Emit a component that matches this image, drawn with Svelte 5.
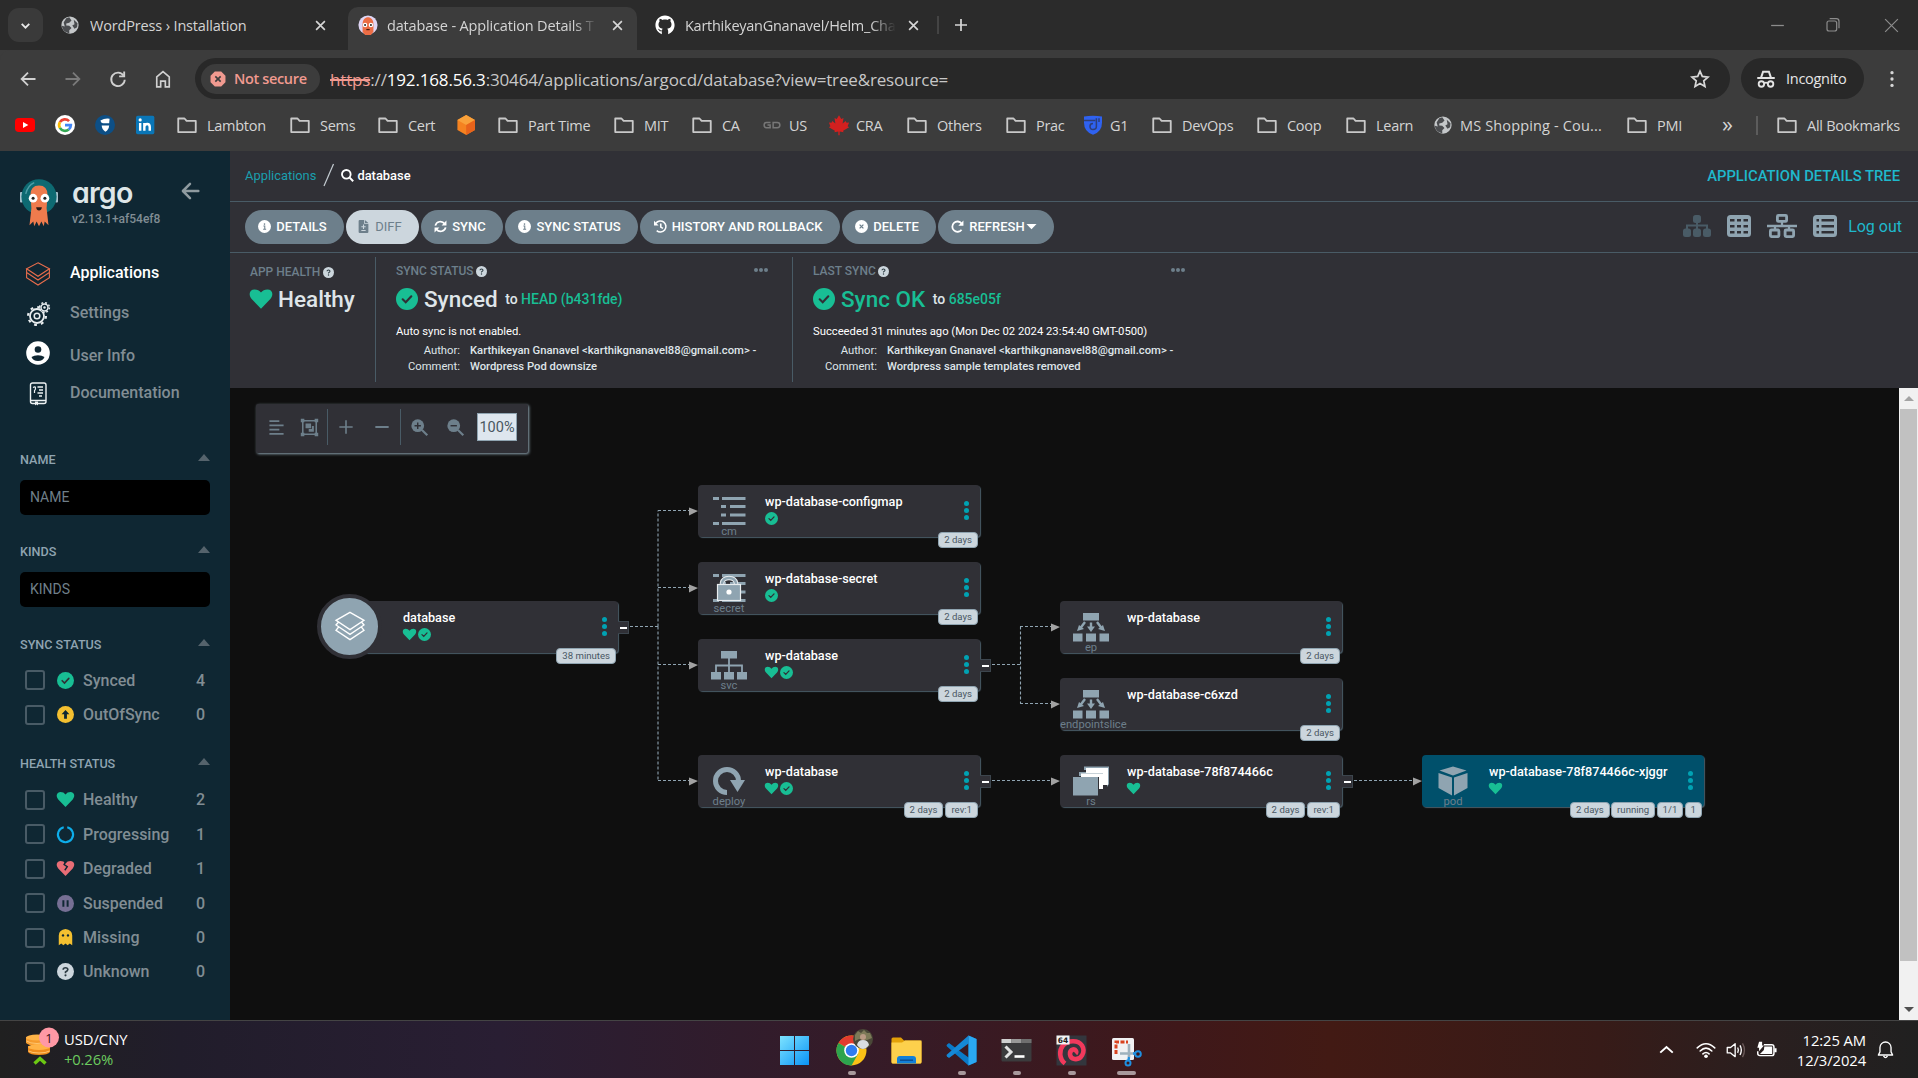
<script>
  const tabs = [
    { icon: 'globe', title: 'WordPress › Installation', active: false },
    { icon: 'argo', title: 'database - Application Details T', active: true },
    { icon: 'github', title: 'KarthikeyanGnanavel/Helm_Cha', active: false },
  ];

  const bookmarks = [
    { icon: 'youtube' }, { icon: 'google' }, { icon: 'shield' }, { icon: 'linkedin' },
    { icon: 'folder', label: 'Lambton' }, { icon: 'folder', label: 'Sems' }, { icon: 'folder', label: 'Cert' },
    { icon: 'cube' },
    { icon: 'folder', label: 'Part Time' }, { icon: 'folder', label: 'MIT' }, { icon: 'folder', label: 'CA' },
    { icon: 'gd', label: 'US' }, { icon: 'maple', label: 'CRA' },
    { icon: 'folder', label: 'Others' }, { icon: 'folder', label: 'Prac' },
    { icon: 'g1', label: 'G1' },
    { icon: 'folder', label: 'DevOps' }, { icon: 'folder', label: 'Coop' }, { icon: 'folder', label: 'Learn' },
    { icon: 'globe', label: 'MS Shopping - Cou...' },
    { icon: 'folder', label: 'PMI' },
  ];

  const nav = [
    { icon: 'layers', label: 'Applications', active: true },
    { icon: 'gears', label: 'Settings' },
    { icon: 'user', label: 'User Info' },
    { icon: 'docs', label: 'Documentation' },
  ];

  const syncFilters = [
    { icon: 'check', label: 'Synced', count: 4 },
    { icon: 'up', label: 'OutOfSync', count: 0 },
  ];
  const healthFilters = [
    { icon: 'heart', label: 'Healthy', count: 2 },
    { icon: 'progress', label: 'Progressing', count: 1 },
    { icon: 'broken', label: 'Degraded', count: 1 },
    { icon: 'pause', label: 'Suspended', count: 0 },
    { icon: 'ghost', label: 'Missing', count: 0 },
    { icon: 'question', label: 'Unknown', count: 0 },
  ];

  const actions = [
    { icon: 'info', label: 'DETAILS' },
    { icon: 'filediff', label: 'DIFF', disabled: true },
    { icon: 'sync', label: 'SYNC' },
    { icon: 'info', label: 'SYNC STATUS' },
    { icon: 'history', label: 'HISTORY AND ROLLBACK' },
    { icon: 'times', label: 'DELETE' },
    { icon: 'redo', label: 'REFRESH', caret: true },
  ];

  // Coordinates are relative to the tree canvas.
  const nodes = [
    { x: 106, y: 213, kind: 'app', name: 'database', health: true, sync: true, tags: ['38 minutes'], expand: true },
    { x: 468, y: 97, kind: 'cm', name: 'wp-database-configmap', sync: true, tags: ['2 days'] },
    { x: 468, y: 174, kind: 'secret', name: 'wp-database-secret', sync: true, tags: ['2 days'] },
    { x: 468, y: 251, kind: 'svc', name: 'wp-database', health: true, sync: true, tags: ['2 days'], expand: true },
    { x: 468, y: 367, kind: 'deploy', name: 'wp-database', health: true, sync: true, tags: ['2 days', 'rev:1'], expand: true },
    { x: 830, y: 213, kind: 'ep', name: 'wp-database', tags: ['2 days'] },
    { x: 830, y: 290, kind: 'endpointslice', name: 'wp-database-c6xzd', tags: ['2 days'] },
    { x: 830, y: 367, kind: 'rs', name: 'wp-database-78f874466c', health: true, tags: ['2 days', 'rev:1'], expand: true },
    { x: 1192, y: 367, kind: 'pod', name: 'wp-database-78f874466c-xjggr', health: true, tags: ['2 days', 'running', '1/1', '1'], selected: true },
  ];

  const edges = [
    'M400 238.5H428', 'M428 238.5V122.5', 'M428 238.5V392.5', 'M428 122.5H460', 'M428 199.5H460', 'M428 276.5H460', 'M428 392.5H460',
    'M762 276.5H790', 'M790.5 238.5V315.5', 'M790 238.5H822', 'M790 315.5H822',
    'M762 392.5H822', 'M1124 392.5H1184',
  ];
  const arrows = [[468, 124], [468, 201], [468, 278], [468, 394], [830, 240], [830, 317], [830, 394], [1192, 394]];

  const apps = [
    { icon: 'windows' }, { icon: 'chrome', dot: true }, { icon: 'explorer' }, { icon: 'vscode', dot: true },
    { icon: 'terminal', dot: true }, { icon: 'swirl', dot: true }, { icon: 'snip', dot: true, wide: true },
  ];
</script>

{#snippet icon(name, size)}
  <svg class="icon" width={size} height={size} viewBox="0 0 24 24" fill="none" stroke-linecap="butt">
    {#if name === 'globe'}
      <circle cx="12" cy="12" r="11.5" fill="#c4c7c9" />
      <path d="M11 1.500L14 6L11 9L7 10V12.500L11 13L14 16L11 19V23C5 22 1.500 18 1.200 13L5 14L3.500 8.500L7 3Z" fill="#4a4c4f" />
      <path d="M17 5L22 9.500L21.500 15L18 17L15 12.500L18 11Z" fill="#4a4c4f" />
    {:else if name === 'argo'}
      <circle cx="12" cy="12" r="11.500" fill="#dfd6f4" />
      <path d="M5.500 11C5.500 0 18.500 0 18.500 11V20L15.500 24H8.500L5.500 20Z" fill="#ec6d45" />
      <circle cx="8.500" cy="12" r="2.700" fill="#fff" /><circle cx="15.500" cy="12" r="2.700" fill="#fff" />
      <circle cx="8.500" cy="12" r="1.200" fill="#222" /><circle cx="15.500" cy="12" r="1.200" fill="#222" />
      <path d="M10 17.500H14" stroke="#4a1c10" stroke-width="1.500" />
    {:else if name === 'github'}
      <path d="M12 .5C5.400.5.500 5.600.500 12C.5 17 3.700 21.400 8.200 23V19.500C5.200 20 4.800 17.700 3.800 17C3 16.400 4.300 16.200 5.200 17.200C6 18.200 6.800 18.900 8.400 18.300C8.500 17.500 8.900 16.900 9.300 16.600C6.500 16.200 4.200 15 4.200 11.200C4.200 9.700 4.700 8.600 5.500 7.800C5.200 7 5.100 5.600 5.700 4.600C7 4.500 8.300 5.500 8.900 5.900C10.800 5.300 13.200 5.300 15.100 5.900C15.700 5.500 17 4.500 18.300 4.600C18.900 5.600 18.800 7 18.500 7.800C19.300 8.600 19.800 9.700 19.800 11.200C19.800 15 17.500 16.200 14.700 16.600C15.400 17.200 15.800 18.100 15.800 19.300V23C20.300 21.400 23.500 17 23.500 12C23.500 5.600 18.600.5 12 .5Z" fill="#fff" />
    {:else if name === 'close'}
      <path d="M5 5L19 19M19 5L5 19" stroke="#d6d6d6" stroke-width="2.600" />
    {:else if name === 'plus'}
      <path d="M12 3V21M3 12H21" stroke="#d6d6d6" stroke-width="2.600" />
    {:else if name === 'chevdown'}
      <path d="M5 9L12 16L19 9" stroke="#e8e8e8" stroke-width="3.400" />
    {:else if name === 'min'}
      <path d="M3 12H21" stroke="#8c8c8c" stroke-width="1.800" />
    {:else if name === 'restore'}
      <rect x="3" y="6" width="14.500" height="15" rx="3" stroke="#8c8c8c" stroke-width="1.800" />
      <path d="M7 2.500H17Q21 2.500 21 6.500V17" stroke="#8c8c8c" stroke-width="1.800" />
    {:else if name === 'winclose'}
      <path d="M3 3L21 21M21 3L3 21" stroke="#8c8c8c" stroke-width="1.700" />
    {:else if name === 'back'}
      <path d="M22 12H4M12 3.500L3.500 12L12 20.500" stroke="#d0d0d0" stroke-width="2.400" />
    {:else if name === 'forward'}
      <path d="M2 12H20M12 3.500L20.500 12L12 20.500" stroke="#7a7a7a" stroke-width="2.400" />
    {:else if name === 'reload'}
      <path d="M19.500 7.500A9 9 0 1 0 21 13" stroke="#d0d0d0" stroke-width="2.500" /><path d="M21.500 2V9.800H13.500V7.300H19V2Z" fill="#d0d0d0" />
    {:else if name === 'home'}
      <path d="M4.500 9.500L12 3L19.500 9.500V21.500H14.800V14.500H9.200V21.500H4.500Z" stroke="#d0d0d0" stroke-width="2" />
    {:else if name === 'star'}
      <path d="M12 3.500L14.500 9.200L20.700 9.900L16.100 14L17.400 20.100L12 16.900L6.600 20.100L7.900 14L3.300 9.900L9.500 9.200Z" stroke="#d8d8d8" stroke-width="1.900" />
    {:else if name === 'incognito'}
      <path d="M1.500 10.800H22.500M6.200 10L8.500 3.200H15.500L17.800 10" stroke="#e4e4e4" stroke-width="2.400" />
      <circle cx="6.500" cy="18" r="3.300" stroke="#e4e4e4" stroke-width="2.200" /><circle cx="17.500" cy="18" r="3.300" stroke="#e4e4e4" stroke-width="2.200" />
      <path d="M9.500 17Q12 15.500 14.500 17" stroke="#e4e4e4" stroke-width="2" />
    {:else if name === 'dots'}
      <circle cx="12" cy="3.500" r="2.200" fill="#d6d6d6" /><circle cx="12" cy="12" r="2.200" fill="#d6d6d6" /><circle cx="12" cy="20.500" r="2.200" fill="#d6d6d6" />
    {:else if name === 'warn'}
      <path d="M7.200 .8H16.800L23.200 7.200V16.800L16.800 23.200H7.200L.8 16.800V7.200Z" fill="#f19a90" /><path d="M8 8L16 16M16 8L8 16" stroke="#3c3c3c" stroke-width="2.400" />
    {:else if name === 'folder'}
      <path d="M1.500 4.200H9L11.500 7H22.500V20.500H1.500Z" stroke="#c9c9c9" stroke-width="2.200" stroke-linejoin="round" />
    {:else if name === 'youtube'}
      <rect x="0" y="3.500" width="24" height="17" rx="4.500" fill="#f00" /><path d="M9.600 8.300L16 12L9.600 15.700Z" fill="#fff" />
    {:else if name === 'google'}
      <circle cx="12" cy="12" r="12" fill="#fff" />
      <path d="M16.900 7.300A7 7 0 0 0 5.900 8.500" stroke="#ea4335" stroke-width="3.200" />
      <path d="M5.900 8.500A7 7 0 0 0 5.900 15.500" stroke="#fbbc05" stroke-width="3.200" />
      <path d="M5.900 15.500A7 7 0 0 0 16.500 17.400" stroke="#34a853" stroke-width="3.200" />
      <path d="M12 12.200H19A7 7 0 0 1 16.500 17.400" stroke="#4285f4" stroke-width="3.200" />
    {:else if name === 'shield'}
      <circle cx="12" cy="12" r="12" fill="#0d4f86" />
      <path d="M6.500 6.500Q12 3.500 17.500 4.500L17 10H9.500Q7 9.500 6.500 6.500Z" fill="#fff" /><path d="M8 12.500H17Q16.500 18 12.500 20Q8.500 17.500 8 12.500Z" fill="#fff" />
    {:else if name === 'linkedin'}
      <rect x="0" y="1" width="22" height="22" rx="2" fill="#0a76b7" />
      <path d="M5 9.500V19M10 19V9.500M10 14Q10.500 10.800 13.500 10.800Q16.500 10.800 16.500 14.500V19" stroke="#fff" stroke-width="2.900" /><circle cx="5" cy="5.900" r="1.900" fill="#fff" />
    {:else if name === 'cube'}
      <path d="M11 0L21.500 6V18L11 24L.5 18V6Z" fill="#f58220" /><path d="M11 0L21.500 6L11 12L.5 6Z" fill="#f9a13a" /><path d="M11 12L21.500 6V18L11 24Z" fill="#e8631b" />
    {:else if name === 'gd'}
      <path d="M10 8.500H4.500Q1.500 8.500 1.500 12T4.500 15.500H9.500V12H6M13.500 8.500H19Q22.500 8.500 22.500 12T19 15.500H13.500Z" stroke="#777" stroke-width="2" />
    {:else if name === 'maple'}
      <path d="M12-1L15 4L18 2.500L16.800 10L21 6.500L22 9L25.500 8.500L23.500 13.500L25.500 15L17.500 19.500L18 21.500L12.900 20.500V25.500H11.100V20.500L6 21.500L6.500 19.500L-1.500 15L.5 13.500L-1.500 8.500L2 9L3 6.500L7.200 10L6 2.500L9 4Z" fill="#d2201f" />
    {:else if name === 'g1'}
      <path d="M0 .5Q12-1 24 .5V9Q24 21 12 25Q0 21 0 9Z" fill="#2f62f0" /><path d="M0 6H15M16.500 3V14Q16.500 18 12 18Q8 18 8 13.500Q8 10 12 10M20 3V8" stroke="#2d3e78" stroke-width="2" />
    {:else if name === 'layers'}
      <g stroke="#e96d4c" stroke-width="1.100"><path d="M12 .8L23.400 6.800L12 14.300L.6 6.800Z" /><path d="M.6 6.800V10.500L12 18L23.400 10.500V6.800M.6 10.500V15.600L12 23L23.400 15.600V10.500" /></g>
    {:else if name === 'gears'}
      <circle cx="11" cy="14" r="7" stroke="#e8edef" stroke-width="1.800" /><circle cx="11" cy="14" r="8.900" stroke="#e8edef" stroke-width="2.200" stroke-dasharray="2.800 4.190" />
      <circle cx="11" cy="14" r="2.800" stroke="#e8edef" stroke-width="1.500" />
      <circle cx="18.500" cy="5.500" r="4.600" fill="#0f2733" /><circle cx="18.500" cy="5.500" r="3.500" stroke="#e8edef" stroke-width="1.500" /><circle cx="18.500" cy="5.500" r="4.900" stroke="#e8edef" stroke-width="1.500" stroke-dasharray="1.900 1.950" /><circle cx="18.500" cy="5.500" r="1.200" fill="#e8edef" />
    {:else if name === 'user'}
      <circle cx="12" cy="12" r="11.800" fill="#fff" /><circle cx="12" cy="8.500" r="3.300" fill="#0f2733" /><path d="M5.500 16Q8 14.300 12 14.300T18.500 16Q17 20 12 20T5.500 16Z" fill="#0f2733" />
    {:else if name === 'docs'}
      <rect x="4.500" y="1" width="15.500" height="20.500" rx="2" stroke="#eef2f4" stroke-width="1.400" /><path d="M5 18.500H20M11.500 5H17M13 8H17M11.500 11H17M13 14H16" stroke="#eef2f4" stroke-width="1.300" /><path d="M7 5.500Q9.500 4 9.500 6T8.500 8.500V11" stroke="#eef2f4" stroke-width="1.200" /><path d="M9 19.500H12V23.500L10.500 22.300L9 23.500Z" fill="#eef2f4" />
    {:else if name === 'sideback'}
      <path d="M22 12H5M12 3.500L3.500 12L12 20.500" stroke="#8f9ba0" stroke-width="3" stroke-linecap="round" stroke-linejoin="round" />
    {:else if name === 'check'}
      <circle cx="12" cy="12" r="12" fill="#18be94" /><path d="M7.300 12.300L10.600 15.500L16.700 9" stroke="#303036" stroke-width="2.300" stroke-linecap="round" />
    {:else if name === 'up'}
      <circle cx="12" cy="12" r="12" fill="#f4c030" /><path d="M12 5.500L17.500 11.500H14V18H10V11.500H6.500Z" fill="#0f2733" />
    {:else if name === 'heart'}
      <path d="M12 22.500L1.800 12C-2.300 7-.2 1.500 5 1.500Q9.500 1.500 12 5Q14.500 1.500 19 1.500C24.200 1.500 26.300 7 22.200 12Z" fill="#18be94" />
    {:else if name === 'progress'}
      <path d="M9.500 1.700A10.700 10.700 0 1 0 14.500 1.700" stroke="#0dadea" stroke-width="2.900" />
    {:else if name === 'broken'}
      <path d="M12 22.500L1.800 12C-2.300 7-.2 1.500 5 1.500Q9.500 1.500 12 5Q14.500 1.500 19 1.500C24.200 1.500 26.300 7 22.200 12Z" fill="#e96d76" /><path d="M13 1L10 6.500L14.500 9.500L11 14.500" stroke="#0f2733" stroke-width="2" />
    {:else if name === 'pause'}
      <circle cx="12" cy="12" r="12" fill="#766f94" /><path d="M9 7.500V16.500M15 7.500V16.500" stroke="#0f2733" stroke-width="2.800" />
    {:else if name === 'ghost'}
      <path d="M2.500 23V9Q3 1 12 0Q21 1 21.500 9V23L18 20.500L15 23L12 20.500L9 23L6 20.500Z" fill="#f4c030" /><circle cx="8.500" cy="9" r="1.700" fill="#0f2733" /><circle cx="15.500" cy="9" r="1.700" fill="#0f2733" />
    {:else if name === 'question'}
      <circle cx="12" cy="12" r="12" fill="#ccd6dd" /><path d="M8.700 9.500Q8.800 6.700 12 6.700T15.300 9.300Q15.300 11 12 12.800V14.300" stroke="#2b3a42" stroke-width="2.300" /><circle cx="12" cy="17.400" r="1.500" fill="#2b3a42" />
    {:else if name === 'info'}
      <circle cx="12" cy="12" r="12" fill="#fff" /><path d="M10 11H12.500V17M9.500 17H15" stroke="#6d7f8b" stroke-width="1.900" /><circle cx="12" cy="7.500" r="1.500" fill="#6d7f8b" />
    {:else if name === 'times'}
      <circle cx="12" cy="12" r="12" fill="#fff" /><path d="M8.500 8.500L15.500 15.500M15.500 8.500L8.500 15.500" stroke="#6d7f8b" stroke-width="2.300" />
    {:else if name === 'filediff'}
      <path d="M3 2Q3 0 5 0H13V7H21V22Q21 24 19 24H5Q3 24 3 22ZM14.500 0L21 5.500H14.500Z" fill="#6d7f8b" /><path d="M8 12.500H16M12 8.500V16.500M8 19.500H16" stroke="#ccd6dd" stroke-width="2" />
    {:else if name === 'sync'}
      <path d="M2.500 10.500A9.500 9.500 0 0 1 19.500 7M21.500 13.500A9.500 9.500 0 0 1 4.500 17" stroke="#fff" stroke-width="3.200" /><path d="M23 1V10H14ZM1 23V14H10Z" fill="#fff" />
    {:else if name === 'history'}
      <path d="M3.500 6A10.200 10.200 0 1 1 5 19.500M12.500 6.500V13L16.500 15.500" stroke="#fff" stroke-width="2.900" /><path d="M0 1.500V10H8.500Z" fill="#fff" />
    {:else if name === 'redo'}
      <path d="M19.500 6.500A9.500 9.500 0 1 0 19.500 18" stroke="#fff" stroke-width="3.300" /><path d="M23 1V10.500H13.500Z" fill="#fff" />
    {:else if name === 'search'}
      <circle cx="9.800" cy="9.800" r="8" stroke="#fff" stroke-width="3.400" /><path d="M15.500 15.500L22.500 22.500" stroke="#fff" stroke-width="3.800" />
    {:else if name === 'caret'}
      <path d="M1 6.500H23L12 18Z" fill="#fff" />
    {:else if name === 'align'}
      <path d="M2 3H16M2 9H22M2 15H16M2 21H22" stroke="#6d7f8b" stroke-width="2.500" />
    {:else if name === 'fit'}
      <path d="M3.500 3.500H20.500V20.500H3.500Z" stroke="#6d7f8b" stroke-width="2" /><path d="M1 1H5.500V5.500H1ZM18.500 1H23V5.500H18.500ZM1 18.500H5.500V23H1ZM18.500 18.500H23V23H18.500ZM7 7H14V13H7ZM11 14H15V10H17.500V17.500H11Z" fill="#6d7f8b" />
    {:else if name === 'tplus'}
      <path d="M12 2V22M2 12H22" stroke="#6d7f8b" stroke-width="2.400" />
    {:else if name === 'tminus'}
      <path d="M2 12H22" stroke="#6d7f8b" stroke-width="3" />
    {:else if name === 'zoomin' || name === 'zoomout'}
      <circle cx="9.500" cy="9.500" r="9" fill="#6d7f8b" /><path d="M15.500 15.500L23 23" stroke="#6d7f8b" stroke-width="3" /><path d={name === 'zoomin' ? 'M9.500 5V14M5 9.500H14' : 'M5 9.500H14'} stroke="#303036" stroke-width="2" />
    {:else if name === 'wifi'}
      <path d="M1.500 9.500Q12-.5 22.500 9.500M5 13.200Q12 6.500 19 13.200M8.300 16.700Q12 13.200 15.700 16.700" stroke="#fff" stroke-width="1.900" stroke-linecap="round" /><circle cx="12" cy="19.500" r="2.200" fill="#fff" />
    {:else if name === 'sound'}
      <path d="M1.500 9V15.500H5.500L11 20V4.500L5.500 9Z" stroke="#fff" stroke-width="1.600" stroke-linejoin="round" /><path d="M14 9Q15.800 12 14 15.500M16.800 6.500Q20 12 16.800 18" stroke="#fff" stroke-width="1.600" /><path d="M19.800 4Q24.500 12 19.800 20.500" stroke="#6b5a59" stroke-width="1.600" />
    {:else if name === 'battery'}
      <path d="M9 6.500H18Q20.500 6.500 20.500 9V16.500Q20.500 19 18 19H4.500Q2 19 2 16.500V14" stroke="#fff" stroke-width="1.700" /><path d="M9.500 8.500H18.500V17H4.500L9 12.500Z" fill="#fff" /><path d="M21 10.500H23.500V15H21ZM3.500 3H7V7.500H9L3.500 14V10H1.500Z" fill="#fff" />
    {:else if name === 'bell'}
      <path d="M3 19H21L19 15V9.500A7 7 0 0 0 5 9.500V15Z" stroke="#fff" stroke-width="1.700" stroke-linejoin="round" /><path d="M9.500 20Q12 24.500 14.500 20" stroke="#fff" stroke-width="1.700" />
    {:else if name === 'chevup'}
      <path d="M2 17L12 8L22 17" stroke="#fff" stroke-width="3.200" />
    {/if}
  </svg>
{/snippet}

{#snippet kindIcon(kind)}
  <svg class="icon" width="36" height="30" viewBox="0 0 36 30" fill="#8fa4b1">
    {#if kind === 'cm' || kind === 'secret'}
      <path d="M2 1H8V4H2ZM11 1H34.500V4H11ZM10 9H15V12H10ZM19 9H34.500V12H19ZM10 17.500H15V20.500H10ZM19 17.500H34.500V20.500H19ZM2 26H8V29H2ZM11 26H34.500V29H11Z" />
      {#if kind === 'secret'}
        <path d="M11 13V10Q12 5 18 5T25 10V13" fill="none" stroke="#e8edf0" stroke-width="4.500" /><path d="M11 13V10Q12 5 18 5T25 10V13" fill="none" stroke="#8fa4b1" stroke-width="2.500" />
        <rect x="6.500" y="11.500" width="23" height="16" stroke="#e8edf0" stroke-width="1.200" /><circle cx="18" cy="19" r="2.600" fill="#fff" />
      {/if}
    {:else if kind === 'svc'}
      <path d="M10 1H26V8.500H10ZM0 22H10V29.500H0ZM13 22H23V29.500H13ZM26 22H36V29.500H26Z" /><path d="M18 8V22M5 22V15.500H31V22" fill="none" stroke="#8fa4b1" stroke-width="1.800" />
    {:else if kind === 'ep' || kind === 'endpointslice'}
      <path d="M10 1H26V8.500H10ZM0 21.500H9.500V29.500H0ZM13 21.500H23V29.500H13ZM26.500 21.500H36V29.500H26.500ZM4 19L6 13L11 17ZM14 14.500H22L18 20ZM32 19L30 13L25 17Z" /><path d="M12 10L7.500 16M18 10.500V15M24 10L28.500 16" fill="none" stroke="#8fa4b1" stroke-width="2.400" />
    {:else if kind === 'deploy'}
      <path d="M16 26.500A11.500 11.500 0 1 1 27.500 15" fill="none" stroke="#8fa4b1" stroke-width="5" /><path d="M19 14H34L26.500 26Z" />
    {:else if kind === 'rs'}
      <path d="M11 .5H36V18L34 21V4H11ZM6 6H30V23H26V10H6Z" fill="#8fa4b1" /><path d="M13 2H35V19H30V7H13ZM8 7.500H30V23H26V11H8Z" fill="#fff" /><rect x="0" y="11" width="25" height="18.500" />
    {:else if kind === 'pod'}
      <path d="M18 .5L31.500 4.500L18 9.500L4.500 4.500ZM3.500 7L17 11.500V29.500L3.500 22ZM32.500 7L19 11.500V29.500L32.500 22Z" />
    {/if}
  </svg>
{/snippet}

{#snippet appIcon(name)}
  <svg class="icon" width="31" height="31" viewBox="0 0 31 31">
    {#if name === 'windows'}
      <linearGradient id="win" x1="0" y1="0" x2="1" y2="1"><stop offset="0" stop-color="#7de3ff" /><stop offset="1" stop-color="#0a93f5" /></linearGradient>
      <path d="M1 1H15V15H1ZM16 1H30V15H16ZM1 16H15V30H1ZM16 16H30V30H16Z" fill="url(#win)" />
    {:else if name === 'chrome'}
      <circle cx="15.500" cy="15.500" r="15" fill="#fbc116" /><path d="M15.500 15.500L2.500 8A15 15 0 0 1 28.500 8Z" fill="#e33b2e" /><path d="M15.500 15.500L2.500 8A15 15 0 0 0 15.500 30.500L22 19Z" fill="#2da44e" /><circle cx="15.500" cy="15.500" r="7.300" fill="#fff" /><circle cx="15.500" cy="15.500" r="5.700" fill="#2f7cf0" />
    {:else if name === 'explorer'}
      <path d="M.5 4Q.5 2.500 2 2.500H10L13 5.500H29Q30.500 5.500 30.500 7V27Q30.500 28.500 29 28.500H2Q.5 28.500 .5 27Z" fill="#e3a008" /><path d="M.5 7.500H11L14 5.500H30.500V27Q30.500 28.500 29 28.500H2Q.5 28.500 .5 27Z" fill="#fdd04c" /><path d="M6 28.500V24Q6 21 9 21H22Q25 21 25 24V28.500Z" fill="#1280d8" /><path d="M9 25.200H22" stroke="#0b4f94" stroke-width="1.500" />
    {:else if name === 'vscode'}
      <path d="M22.500 .5L30.500 4V27L22.500 30.500L1 11.500Q0 10.500 1 9.500L3 8L22.500 22.500Z" fill="#0a7ac8" /><path d="M22.500 8.500L3 23L1 21.500Q0 20.500 1 19.500L22.500 .5Z" fill="#1588d6" /><path d="M22.500 .5L30.500 4V27L22.500 30.500Z" fill="#2aa8f2" />
    {:else if name === 'terminal'}
      <rect x=".5" y="4" width="30" height="22.500" rx="1" fill="#3b3b3d" /><path d="M.5 4H10.500V8H.5Z" fill="#d0d0d0" /><path d="M10.500 4H20.500V8H10.500Z" fill="#989898" /><path d="M20.500 4H30.500V8H20.500Z" fill="#6f6f6f" /><path d="M4.500 11.500L10 17L4.500 22.500" fill="none" stroke="#e2e2e2" stroke-width="3" /><path d="M13.500 21.500H23.500" stroke="#fff" stroke-width="2.600" />
    {:else if name === 'swirl'}
      <rect x=".5" y=".5" width="30" height="30" fill="#33363d" /><path d="M9 28.500C3 24 3 15 7 10.500C12 5 22 4.500 26 10.500C30 17 25 25 18.500 24C13 23 12.500 16 17 14.500C20 14 21 17 19.500 18.500" fill="none" stroke="#f2395c" stroke-width="4.600" /><rect x=".5" y=".5" width="13" height="9" fill="#f3f3f3" /><text class="bits" x="1.800" y="8">64</text>
    {:else if name === 'snip'}
      <rect x="1" y="3" width="22" height="22" rx="1.500" fill="#f1f1f3" /><path d="M5 19V7H17" fill="none" stroke="#d9421f" stroke-width="3" stroke-dasharray="4 1.500" /><path d="M18 9V22M9 18.500H25" stroke="#9fb1bd" stroke-width="2.600" /><circle cx="27" cy="19" r="2.800" fill="none" stroke="#1f8fe0" stroke-width="2" /><circle cx="17" cy="28" r="2.500" fill="none" stroke="#1f8fe0" stroke-width="2" /><path d="M18 22L17.500 25.500M22 18.500H24.500" stroke="#1f8fe0" stroke-width="2.400" />
    {/if}
  </svg>
{/snippet}

{#snippet filterList(title, items, group)}
  <section class="filter {group}">
    <h3>{title}<i class="up"></i></h3>
    {#each items as f}
      <label class="option"><span class="box"></span><span class="opt-icon">{@render icon(f.icon, 17)}</span><span class="opt-label">{f.label}</span><b>{f.count}</b></label>
    {/each}
  </section>
{/snippet}

<div class="desktop">
  <header class="browser">
    <div class="tabstrip">
      <div class="tabsearch">{@render icon('chevdown', 13)}</div>
      <div class="tabs">
        {#each tabs as tab}
          <div class="tab" class:active={tab.active}>
            {@render icon(tab.icon, tab.icon === 'globe' ? 18 : 20)}
            <span class="title">{tab.title}</span>
            {@render icon('close', 15)}
          </div>
        {/each}
      </div>
      <i class="tabsep"></i>
      <span class="newtab">{@render icon('plus', 16)}</span>
      <div class="winctl"><span>{@render icon('min', 17)}</span><span>{@render icon('restore', 16)}</span><span>{@render icon('winclose', 17)}</span></div>
    </div>
    <div class="toolbar">
      <div class="navs">
        <span>{@render icon('back', 18)}</span><span>{@render icon('forward', 18)}</span><span>{@render icon('reload', 18)}</span><span>{@render icon('home', 20)}</span>
      </div>
      <div class="omnibox">
        <span class="chip">{@render icon('warn', 16)}Not secure</span>
        <span class="url"><s>https</s>://<b>192.168.56.3</b>:30464/applications/argocd/database?view=tree&amp;resource=</span>
        {@render icon('star', 22)}
      </div>
      <div class="incognito">{@render icon('incognito', 20)}<span>Incognito</span></div>
      <span class="menu">{@render icon('dots', 18)}</span>
    </div>
    <div class="bookmarks">
      {#each bookmarks as b}
        <span class="bm" class:folder={b.icon === 'folder'} class:site={b.icon === 'globe'}>{@render icon(b.icon, b.icon === 'folder' || !b.label ? 20 : 18)}{#if b.label}<span>{b.label}</span>{/if}</span>
      {/each}
      <span class="more">»</span>
      <i class="bmsep"></i>
      <span class="bm folder">{@render icon('folder', 20)}<span>All Bookmarks</span></span>
    </div>
  </header>

  <div class="page">
    <aside class="sidebar">
      <div class="brand">
        <svg class="icon" width="38" height="51" viewBox="0 0 40 52">
          <rect x="0" y="15" width="3" height="11" rx="1" fill="#a9c2cd" /><rect x="37" y="15" width="3" height="11" rx="1" fill="#a9c2cd" />
          <circle cx="20" cy="20" r="18.500" fill="#0e6a72" /><path d="M6 17Q8 8 15 5" fill="none" stroke="#4f9fa8" stroke-width="1.500" />
          <path d="M11 18Q11 8 20 8T29 18L28 32L30 50L26 46L25 51L22.500 46L20 51L17.500 46L15 51L14 46L10 50L12 32Z" fill="#ef7b4d" />
          <circle cx="13.800" cy="21.500" r="4.600" fill="#fff" /><circle cx="26.200" cy="21.500" r="4.600" fill="#fff" /><circle cx="13.800" cy="21.500" r="1.600" fill="#222" /><circle cx="26.200" cy="21.500" r="1.600" fill="#222" />
          <path d="M17 31H23Q22.500 34.500 20 34.500T17 31Z" fill="#2b1a16" />
        </svg>
        <div class="wordmark"><strong>argo</strong><small>v2.13.1+af54ef8</small></div>
        <span class="collapse">{@render icon('sideback', 20)}</span>
      </div>
      <nav>
        {#each nav as item}
          <a class:active={item.active} class={item.icon}><span class="ni">{@render icon(item.icon, 24)}</span>{item.label}</a>
        {/each}
      </nav>
      <section class="filter text"><h3>NAME<i class="up"></i></h3><div class="input">NAME</div></section>
      <section class="filter text"><h3>KINDS<i class="up"></i></h3><div class="input">KINDS</div></section>
      {@render filterList('SYNC STATUS', syncFilters, 'syncs')}
      {@render filterList('HEALTH STATUS', healthFilters, 'healths')}
    </aside>

    <main>
      <div class="crumbs">
        <span class="link">Applications</span>
        <svg class="slash" width="12" height="24" viewBox="0 0 12 24"><path d="M1 23L10.500 1" stroke="#c4ccd2" stroke-width="1.200" /></svg>
        {@render icon('search', 13)}<b>database</b>
        <span class="pagetitle">APPLICATION DETAILS TREE</span>
      </div>
      <div class="actions">
        <div class="buttons">
          {#each actions as a}
            <span class="btn" class:disabled={a.disabled}>{@render icon(a.icon, 13)}<span>{a.label}</span>{#if a.caret}<span class="drop">{@render icon('caret', 11)}</span>{/if}</span>
          {/each}
        </div>
        <div class="views">
          <svg class="icon" width="28" height="24" viewBox="0 0 28 24" fill="#495b66"><rect x="10" y="1" width="8" height="8" rx="2.500" /><rect x="0" y="14.500" width="8" height="8.500" rx="2.500" /><rect x="10" y="14.500" width="8" height="8.500" rx="2.500" /><rect x="20" y="14.500" width="8" height="8.500" rx="2.500" /><path d="M14 8V15M4 15V11.500H24V15" fill="none" stroke="#495b66" stroke-width="2" /></svg>
          <svg class="icon" width="24" height="24" viewBox="0 0 24 24"><rect x="0" y="1" width="24" height="22" rx="3.500" fill="#8fa4b1" /><path d="M3 5H7.500V7.500H3ZM10 5H14V7.500H10ZM16.500 5H21V7.500H16.500ZM3 11H7.500V13.500H3ZM10 11H14V13.500H10ZM16.500 11H21V13.500H16.500ZM3 17H7.500V19.500H3ZM10 17H14V19.500H10ZM16.500 17H21V19.500H16.500Z" fill="#303036" /></svg>
          <svg class="icon" width="30" height="24" viewBox="0 0 30 24" fill="none" stroke="#8fa4b1" stroke-width="2.800"><rect x="10.400" y="1.400" width="9.200" height="6" rx="1" /><path d="M15 8V12M0 12H30M8 12V16M22 12V16" stroke-width="2.300" /><rect x="3.400" y="16" width="8.500" height="6.600" rx="1" /><rect x="18.100" y="16" width="8.500" height="6.600" rx="1" /></svg>
          <svg class="icon" width="24" height="24" viewBox="0 0 24 24"><rect x="0" y="1" width="24" height="22" rx="3.500" fill="#8fa4b1" /><path d="M3.500 5H6V7.500H3.500ZM8.500 5H21V7.500H8.500ZM3.500 11H6V13.500H3.500ZM8.500 11H21V13.500H8.500ZM3.500 17H6V19.500H3.500ZM8.500 17H21V19.500H8.500Z" fill="#303036" /></svg>
          <span class="logout">Log out</span>
        </div>
      </div>
      <div class="status">
        <div class="cell health">
          <h4>APP HEALTH{@render icon('question', 11)}</h4>
          <div class="big">{@render icon('heart', 22)}<strong>Healthy</strong></div>
        </div>
        <div class="cell sync">
          <h4>SYNC STATUS{@render icon('question', 11)}<span class="ell"><i></i><i></i><i></i></span></h4>
          <div class="big">{@render icon('check', 22)}<strong>Synced</strong><span>to <em>HEAD (b431fde)</em></span></div>
          <p>Auto sync is not enabled.</p>
          <dl><dt>Author:</dt><dd>Karthikeyan Gnanavel &lt;karthikgnanavel88@gmail.com&gt; -</dd><dt>Comment:</dt><dd>Wordpress Pod downsize</dd></dl>
        </div>
        <div class="cell last">
          <h4>LAST SYNC{@render icon('question', 11)}<span class="ell"><i></i><i></i><i></i></span></h4>
          <div class="big">{@render icon('check', 22)}<strong class="green">Sync OK</strong><span>to <em>685e05f</em></span></div>
          <p>Succeeded 31 minutes ago (Mon Dec 02 2024 23:54:40 GMT-0500)</p>
          <dl><dt>Author:</dt><dd>Karthikeyan Gnanavel &lt;karthikgnanavel88@gmail.com&gt; -</dd><dt>Comment:</dt><dd>Wordpress sample templates removed</dd></dl>
        </div>
      </div>

      <div class="treewrap">
        <div class="tree">
          <div class="graphbar">
            <span class="g1">{@render icon('align', 17)}</span><span class="g2">{@render icon('fit', 19)}</span><i></i>
            <span class="g3">{@render icon('tplus', 16)}</span><span class="g3">{@render icon('tminus', 16)}</span><i></i>
            <span class="g3">{@render icon('zoomin', 17)}</span><span class="g3">{@render icon('zoomout', 17)}</span>
            <span class="pct">100%</span>
          </div>
          <svg class="edges" width="1669" height="632">
            {#each edges as d}<path {d} fill="none" stroke="#8fa4b1" stroke-width="1.100" stroke-dasharray="3 2" />{/each}
            {#each arrows as [x, y]}<path d="M{x - 9} {y - 4.5}L{x} {y - 1}L{x - 9} {y + 3.5}Z" fill="#a2a2a2" />{/each}
          </svg>
          {#each nodes as n}
            <div class="node" class:app={n.kind === 'app'} class:selected={n.selected} style="left:{n.x}px;top:{n.y}px">
              {#if n.kind === 'app'}
                <div class="appcircle"><svg class="icon" width="32" height="32" viewBox="0 0 24 24" fill="none" stroke="#fff" stroke-width="1"><path d="M12 1L22.500 7L12 14L1.500 7Z" /><path d="M3.500 8.300L1.500 10.500L12 17.500L22.500 10.500L20.500 8.300M3.500 12L1.500 14.500L12 21.500L22.500 14.500L20.500 12" /></svg></div>
              {:else}
                <div class="kind">{@render kindIcon(n.kind)}<span>{n.kind}</span></div>
              {/if}
              <div class="info">
                <span>{n.name}</span>
                <div class="marks">{#if n.health}{@render icon('heart', 13)}{/if}{#if n.sync}{@render icon('check', 13)}{/if}</div>
              </div>
              <div class="kebab"><i></i><i></i><i></i></div>
              {#if n.expand}<div class="expand"></div>{/if}
              <div class="tags">{#each n.tags as t}<span>{t}</span>{/each}</div>
            </div>
          {/each}
        </div>
        <div class="scroll"><i class="sup"></i><div class="thumb"></div><i class="sdown"></i></div>
      </div>
    </main>
  </div>

  <footer class="taskbar">
    <div class="widget">
      <svg class="icon" width="36" height="42" viewBox="0 0 36 42">
        <path d="M3 19V25Q5 28 14 28T25 25V19Z" fill="#f08c1c" /><path d="M1 10V16Q3 18.500 12 18.500T23 16V10Z" fill="#f59b2d" />
        <ellipse cx="12" cy="10.500" rx="11" ry="3" fill="#ffb347" /><ellipse cx="14" cy="20" rx="11" ry="3" fill="#ffb347" /><path d="M1.500 14Q5 16.500 12 16.500T22.500 14M3.500 24Q7 26 14 26T24.500 24" fill="none" stroke="#ffc670" stroke-width="1" />
        <path d="M9.500 36.500L15 31.500L20.500 36.500" fill="none" stroke="#6cc913" stroke-width="3.400" />
        <circle cx="24" cy="10.500" r="10" fill="#ff98a5" /><text class="badge" x="24" y="15.500" text-anchor="middle">1</text>
      </svg>
      <div class="fx"><span>USD/CNY</span><span class="gain">+0.26%</span></div>
    </div>
    <div class="apps">
      {#each apps as a}
        <div class="slot">{@render appIcon(a.icon)}{#if a.icon === 'chrome'}<svg class="avatar" width="20" height="20" viewBox="0 0 20 20"><circle cx="10" cy="10" r="10" fill="#4a4838" /><path d="M2 6L5 2L8 4L11 1L14 4L17 4L19 9L14 11L6 10L2 12Z" fill="#7d7a58" /><circle cx="10" cy="8" r="3" fill="#b99a84" /><path d="M4 16Q5 11 10 11T16 16Q13 20 10 20T4 16Z" fill="#d9dde0" /></svg>{/if}{#if a.dot}<i class:wide={a.wide}></i>{/if}</div>
      {/each}
    </div>
    <div class="tray">
      <span class="w40">{@render icon('chevup', 15)}</span><span class="w40">{@render icon('wifi', 20)}</span><span class="w20">{@render icon('sound', 20)}</span><span class="w40">{@render icon('battery', 21)}</span>
      <div class="clock"><span>12:25 AM</span><span>12/3/2024</span></div>
      <span class="w38">{@render icon('bell', 19)}</span>
    </div>
  </footer>
</div>

<style>
  :global(body) { background: #0f0f0f; }
  .desktop { width: 1918px; height: 1078px; overflow: hidden; display: grid; grid-template-rows: 151px 869px 58px; font-family: Roboto, sans-serif; box-sizing: border-box; }
  .desktop :global(*) { box-sizing: border-box; }
  .icon { display: block; flex: none; overflow: visible; }
  i { font-style: normal; }

  /* browser chrome */
  .browser { background: #3c3c3c; font-family: "Open Sans", "Noto Sans", sans-serif; color: #d4d4d4; font-size: 14.5px; letter-spacing: -0.28px; white-space: nowrap; }
  .tabstrip { height: 50px; background: #2b2b2b; display: flex; align-items: center; padding-left: 8px; }
  .tabsearch { width: 35px; height: 34px; border-radius: 11px; background: #3a3a3a; display: grid; place-items: center; margin-right: 4px; }
  .tabs { display: flex; align-self: stretch; padding-left: 4px; letter-spacing: -0.16px; }
  .tab { width: 297px; height: 43px; margin-top: 7px; padding: 0 20px 7px 10px; display: flex; align-items: center; gap: 11px; }
  .tab.active { background: #3c3c3c; border-radius: 10px 10px 0 0; width: 289px; padding-left: 10px; padding-right: 12px; gap: 9px; }
  .tab:last-child { padding-left: 18px; width: 290px; padding-right: 9px; gap: 10px; letter-spacing: -0.26px; }
  .tab .title { flex: 1; overflow: hidden; }
  .tab.active .title, .tab:last-child .title { flex: none; width: 211px; margin-right: auto; -webkit-mask-image: linear-gradient(90deg, #000 88%, transparent); mask-image: linear-gradient(90deg, #000 88%, transparent); }
  .tabsep { width: 2px; height: 18px; background: #444; margin-left: 10px; }
  .newtab { margin-left: 14px; }
  .winctl { margin-left: auto; display: flex; margin-right: -2px; }
  .winctl span { width: 57px; display: grid; place-items: center; }
  .winctl span:nth-child(2) { padding-right: 3px; }
  .toolbar { height: 57px; border-radius: 10px 10px 0 0; display: flex; align-items: center; background: #3c3c3c; padding-left: 5px; }
  .navs { display: flex; width: 190px; }
  .navs span { width: 45px; display: grid; place-items: center; }
  .omnibox { width: 1535px; height: 41px; border-radius: 21px; background: #282828; display: flex; align-items: center; padding: 0 19px 0 6px; }
  .chip { width: 119px; height: 30px; border-radius: 15px; background: #3c3c3c; color: #f19a90; display: flex; align-items: center; gap: 8px; padding-left: 9px; font-size: 14.5px; font-weight: 600; letter-spacing: -0.35px; margin-right: 10px; }
  .url { flex: 1; font-size: 17px; letter-spacing: -0.16px; color: #c7c7c7; padding-top: 2px; }
  .url s { color: #f19a90; text-decoration-thickness: 2px; }
  .url b { font-weight: 400; color: #fff; }
  .incognito { margin-left: 11px; width: 123px; height: 41px; border-radius: 21px; background: #282828; display: flex; align-items: center; gap: 10px; padding-left: 15px; color: #e6e6e6; }
  .menu { margin-left: 19px; }
  .bookmarks { height: 38px; display: grid; align-items: center; padding: 0 0 2px 15px; grid-template-columns: 40px 40px 41px 41px 113px 88px 79px 41px 116px 78px 71px 67px 77px 99px 78px 68px 105px 89px 88px 193px 95px 34px 21px auto; }
  .bm { display: flex; align-items: center; gap: 8px; }
  .bm.folder { gap: 10px; }
  .bm.site { letter-spacing: 0.15px; }
  .more { font-size: 22px; line-height: 20px; margin-top: -4px; }
  .bmsep { width: 2px; height: 19px; background: #5c5c5c; }

  /* sidebar */
  .page { display: grid; grid-template-columns: 230px 1688px; }
  .sidebar { background: #0f2733; padding: 26px 20px 0; color: #818d94; font-weight: 500; }
  .brand { display: flex; height: 52px; }
  .wordmark { margin-left: 14px; width: 110px; }
  .wordmark strong { display: block; font-family: Inter, sans-serif; font-feature-settings: "cv11"; font-weight: 600; font-size: 28.5px; line-height: 30px; color: #dee6e8; letter-spacing: -0.8px; margin-top: 1px; }
  .wordmark small { display: block; font-size: 12px; line-height: 14px; margin-top: 4px; white-space: nowrap; }
  .collapse { margin: 4px 0 0 -2px; }
  nav { margin-top: 23px; display: flex; flex-direction: column; font-size: 16px; }
  nav a { display: flex; align-items: center; height: 40px; }
  nav a.user { height: 44px; padding-top: 2px; }
  nav a.user .ni { margin-bottom: 5px; }
  nav a.docs { height: 33px; }
  nav a.docs .ni { padding-top: 2px; }
  nav a.active { color: #fff; }
  .ni { width: 50px; padding-left: 6px; }
  .layers .ni, .gears .ni { padding-top: 3px; }
  .filter h3 { margin: 0; font-size: 12.6px; line-height: 16px; font-weight: 500; color: #8fa4b1; display: flex; justify-content: space-between; }
  .up { width: 0; height: 0; border: 6.500px solid transparent; border-top: 0; border-bottom: 7px solid #55636c; margin-top: 2px; }
  .filter.text { height: 92px; }
  nav + .filter { margin-top: 43px; }
  .input { height: 35px; margin-top: 12px; background: #000; border-radius: 5px; padding-left: 10px; font-size: 14px; line-height: 35px; font-weight: 400; color: #6f7f89; }
  .option { display: flex; align-items: center; height: 34.4px; padding: 0 5px; font-size: 16px; }
  .syncs { margin-top: 1px; }
  .syncs h3 + .option { margin-top: 10px; }
  .healths { margin-top: 24px; }
  .healths h3 + .option { margin-top: 11px; }
  .box { width: 20px; height: 20px; border: 2px solid #495b66; border-radius: 3px; }
  .opt-icon { margin-left: 12px; width: 26px; }
  .option b { margin-left: auto; font-weight: 500; }

  /* application header */
  main { background: #303036; display: grid; grid-template-rows: 51px 51px 135px 632px; }
  .crumbs { border-bottom: 1px solid #495b66; display: flex; align-items: center; padding: 0 18px 2px 15px; font-size: 12.9px; }
  .link { color: #1a9fae; }
  .slash { margin: 0 6px 0 7px; }
  .crumbs b { font-weight: 500; color: #fff; margin-left: 3px; }
  .pagetitle { margin-left: auto; color: #1fb8cc; font-weight: 500; font-size: 14.8px; padding-top: 2px; }
  .actions { border-bottom: 1px solid #495b66; display: flex; align-items: center; justify-content: space-between; padding: 0 16px 0 15px; }
  .buttons { display: grid; gap: 2px; grid-template-columns: 99px 73px 82px 133px 200px 94px 116px; }
  .btn { height: 34px; border-radius: 17px; background: #6d7f8b; color: #fff; font-size: 13px; font-weight: 500; display: flex; align-items: center; justify-content: center; gap: 5px; white-space: nowrap; padding: 0 4px 2px 0; }
  .btn.disabled { background: #ccd6dd; color: #6d7f8b; font-weight: 400; padding-right: 6px; }
  .drop { margin-left: -4px; }
  .views { display: flex; align-items: center; padding-bottom: 2px; }
  .views .icon + .icon { margin-left: 16px; }
  .logout { color: #1fb8cc; font-size: 16px; margin-left: 11px; }
  .status { display: flex; color: #dfe5e9; padding-top: 4px; }
  .cell { height: 125px; padding-left: 20px; font-size: 11.25px; }
  .cell.health { width: 146px; border-right: 1px solid #495b66; padding-top: 1px; }
  .cell.sync { width: 417px; border-right: 1px solid #495b66; }
  .cell.last { width: 400px; }
  .cell h4 { margin: 6px 0 0; font-size: 12px; line-height: 16px; font-weight: 500; color: #6d7f8b; display: flex; align-items: center; gap: 2px; }
  .cell.health h4 { gap: 3px; }
  .ell { margin: -2px 24px 0 auto; display: flex; gap: 1px; }
  .last .ell { margin-right: 8px; }
  .ell i { width: 4px; height: 4px; border-radius: 2px; background: #6d7f8b; }
  .big { display: flex; align-items: center; height: 32px; margin-top: 4px; font-size: 14px; font-weight: 500; }
  .health .big { margin-top: 3px; }
  .big strong { font-size: 22.500px; font-weight: 500; margin: 0 7.500px 0 6px; }
  .big em { font-style: normal; color: #18be94; }
  .big .green { color: #18be94; }
  .cell p { margin: 9px 0 4px; line-height: 15px; color: #fff; }
  dl { margin: 0; display: grid; grid-template-columns: 64px auto; column-gap: 10px; line-height: 16px; }
  dt { text-align: right; color: #dfe5e9; font-size: 11.25px; }
  dd { margin: 0; font-weight: 500; white-space: nowrap; }

  /* resource tree */
  .treewrap { display: grid; grid-template-columns: 1669px 19px; background: #0f0f0f; }
  .tree { position: relative; }
  .graphbar { width: 272px; height: 49px; margin: 16px 0 0 26px; background: #303036; border-radius: 2px; box-shadow: 1px 1px 3px #8fa4b1; display: flex; align-items: center; padding: 0 11px 3px 11px; }
  .graphbar span { display: grid; place-items: center; }
  .graphbar > i { width: 1px; height: 36px; background: #495b66; }
  .g1 { width: 18px; }
  .g2 { width: 42px; padding-left: 7px; }
  .g3 { width: 36px; }
  .graphbar .pct { width: 40px; height: 28px; margin-left: auto; background: #dee6ee; border: 1px solid #8fa4b1; color: #49565f; font-size: 14.5px; }
  .edges { position: absolute; left: 0; top: 0; }
  .node { position: absolute; width: 282px; height: 52px; background: #303036; border-radius: 4px; box-shadow: 1px 1px 1px #495b66; display: flex; }
  .node.selected { background: #00506b; }
  .kind { width: 62px; padding-top: 11px; display: flex; flex-direction: column; align-items: safe center; font-size: 11.2px; line-height: 12px; color: #6d7f8b; flex: none; }
  .appcircle { width: 65px; height: 65px; border-radius: 50%; background: #8fa4b1; border: 4px solid #303036; margin: -7px 0 0 -19px; display: grid; place-items: center; flex: none; }
  .info { flex: 1; padding: 10px 0 0 5px; font-size: 12.65px; font-weight: 500; line-height: 14px; color: #fff; white-space: nowrap; }
  .app .info { padding-left: 21px; }
  .marks { display: flex; gap: 2px; margin-top: 3px; }
  .kebab { width: 27px; display: flex; flex-direction: column; justify-content: center; align-items: center; gap: 2px; padding-bottom: 1px; }
  .kebab i { width: 5px; height: 5px; border-radius: 50%; background: #00a2b3; }
  .expand { position: absolute; left: 282px; top: 20px; width: 11px; height: 13px; background: #303036; border: 1px solid #3c454d; border-left: 0; }
  .expand::after { content: ""; display: block; width: 7px; height: 2px; margin: 5px 0 0 2px; background: #fff; }
  .tags { position: absolute; right: 2px; bottom: -11px; display: flex; gap: 2px; font-size: 9.600px; line-height: 14px; color: #495763; white-space: nowrap; }
  .selected .tags { gap: 1.300px; }
  .tags span { background: #ccd6dd; border: 1px solid #8fa4b1; border-radius: 4px; padding: 0 5px; }
  .scroll { background: #f1f1f1; display: flex; flex-direction: column; align-items: center; justify-content: space-between; padding: 8px 0; }
  .thumb { width: 17px; height: 552px; background: #c1c1c1; margin: 8px 0 auto; }
  .sup, .sdown { border: 5px solid transparent; }
  .sup { border-top: 0; border-bottom-color: #a3a3a3; }
  .sdown { border-bottom: 0; border-top-color: #505050; }

  /* taskbar */
  .taskbar { border-top: 1px solid #444; display: grid; grid-template-columns: 766px 385px 767px; background: linear-gradient(90deg, #202020 0, #211d2b 180px, #291e33 500px, #351b28 860px, #3f181a 1180px, #421a14 1330px, #371b18 1600px, #2a1f1f 1760px, #202020 1918px); color: #fff; font-family: "Open Sans", "Noto Sans", sans-serif; font-size: 14.8px; letter-spacing: -0.1px; }
  .widget { display: flex; padding: 6px 0 0 25px; }
  .fx { margin-left: 3px; display: flex; flex-direction: column; line-height: 20px; padding-top: 2px; letter-spacing: -0.05px; }
  .gain { color: #6ccb5f; letter-spacing: -0.15px; }
  .badge { font-size: 13px; fill: #3b1015; font-family: "Open Sans", sans-serif; }
  .bits { font-family: "DejaVu Sans", sans-serif; font-weight: 700; font-size: 7.500px; fill: #222; }
  .apps { display: grid; grid-template-columns: repeat(7, 55px); }
  .slot { position: relative; padding: 14px 0 0 14.5px; }
  .slot:first-child { padding-left: 13px; }
  .avatar { position: absolute; left: 32px; top: 8px; }
  .slot i { display: block; width: 8px; height: 4px; margin: 5px 0 0 12px; border-radius: 2px; background: #a8999c; }
  .slot i.wide { width: 19px; margin-left: 6px; }
  .tray { padding-left: 495px; display: flex; align-items: center; }
  .tray > span { display: grid; place-items: center; }
  .w40 { width: 40px; }
  .w20 { width: 20px; }
  .w38 { width: 38px; }
  .clock { width: 80px; display: flex; flex-direction: column; align-items: flex-end; line-height: 20px; }
</style>
